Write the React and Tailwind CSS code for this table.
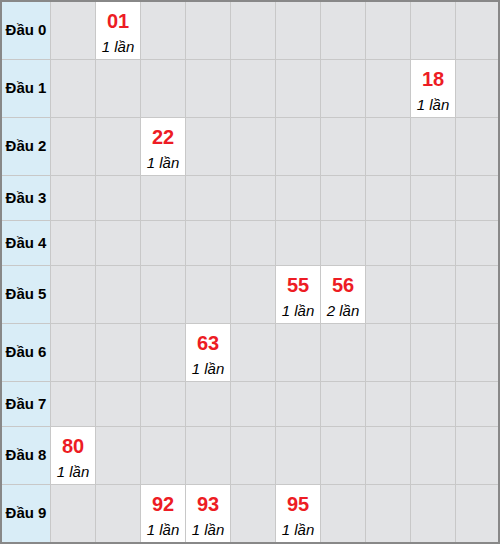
const rows = [
  { head: 0, hits: { 1: 1 } },
  { head: 1, hits: { 8: 1 } },
  { head: 2, hits: { 2: 1 } },
  { head: 3, hits: {} },
  { head: 4, hits: {} },
  { head: 5, hits: { 5: 1, 6: 2 } },
  { head: 6, hits: { 3: 1 } },
  { head: 7, hits: {} },
  { head: 8, hits: { 0: 1 } },
  { head: 9, hits: { 2: 1, 3: 1, 5: 1 } },
]

const digits = [0, 1, 2, 3, 4, 5, 6, 7, 8, 9]

const App = () => {
  return (
    <div
      className="w-[500px] h-[544px] border-2 border-[#888888] bg-[#c8c8c8]"
      style={{ fontFamily: '"Liberation Sans", Arial, sans-serif' }}
    >
      <div className="grid grid-cols-[48px_repeat(9,44px)_1fr] gap-px">
        {rows.map((row) => {
          const empty = Object.keys(row.hits).length === 0
          const h = empty ? 'h-[44px]' : 'h-[57px]'
          return [
            <div
              key={`h${row.head}`}
              className={`${h} bg-[#d9edf7] flex items-center justify-center text-[15px] font-bold text-black`}
            >
              Đầu {row.head}
            </div>,
            ...digits.map((d) => {
              const count = row.hits[d]
              if (!count) {
                return <div key={`${row.head}-${d}`} className={`${h} bg-[#e2e3e5]`} />
              }
              return (
                <div
                  key={`${row.head}-${d}`}
                  className={`${h} bg-white flex flex-col items-center pt-[6px]`}
                >
                  <span className="text-[20px] leading-[26px] font-bold text-[#ed1c24]">
                    {row.head}
                    {d}
                  </span>
                  <span className="mt-[3px] text-[15px] leading-[20px] italic text-black">
                    {count} lần
                  </span>
                </div>
              )
            }),
          ]
        })}
      </div>
    </div>
  )
}

export default App
